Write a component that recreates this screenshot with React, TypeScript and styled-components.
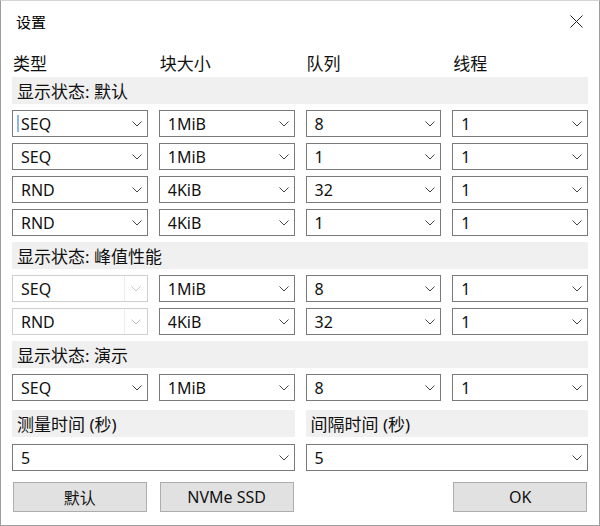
import React from "react";
import styled, { createGlobalStyle } from "styled-components";

const GlobalStyle = createGlobalStyle`
  html, body {
    margin: 0;
    padding: 0;
    background: #ffffff;
  }
  body {
    font-family: "Noto Sans", "Noto Sans CJK SC", sans-serif;
    color: #111;
  }
`;

// window frame
const Window = styled.div`
  width: 600px;
  height: 526px;
  box-sizing: border-box;
  border: 1px solid #9c9c9c;
  border-top-color: #d4d4d4;
  background: #fff;
  display: flex;
  flex-direction: column;
`;

const TitleBar = styled.div`
  height: 41px;
  display: flex;
  align-items: center;
  justify-content: space-between;
  padding: 0 16px 0 15px;
  font-family: "Noto Sans CJK SC", sans-serif;
  font-size: 15px;
  color: #000;
`;

const CloseButton = styled.div`
  width: 14px;
  height: 14px;
  display: flex;
  align-items: center;
  justify-content: center;
`;

const Body = styled.div`
  flex: 1;
  display: flex;
  flex-direction: column;
  padding: 0 11px 13px 11px;
`;

const Grid = styled.div<{ $cols: number }>`
  display: grid;
  grid-template-columns: repeat(${(p) => p.$cols}, 1fr);
  column-gap: 11px;
`;

const HeaderRow = styled(Grid)`
  height: 36px;
  padding-top: 9px;
  box-sizing: border-box;
  align-items: start;
`;

const HeaderCell = styled.div`
  font-family: "Noto Sans CJK SC", sans-serif;
  font-size: 17px;
  line-height: 26px;
  padding-left: 1px;
  color: #111;
`;

const List = styled.div`
  display: flex;
  flex-direction: column;
  gap: 6px;
`;

const Band = styled.div`
  height: 27px;
  background: #f0f0f0;
  display: flex;
  align-items: center;
  padding-left: 5px;
  font-family: "Noto Sans", "Noto Sans CJK SC", sans-serif;
  font-size: 17px;
  color: #111;
`;

const Select = styled.div<{ $disabled?: boolean; $focused?: boolean }>`
  position: relative;
  height: 27px;
  box-sizing: border-box;
  border: 1px solid ${(p) => (p.$disabled ? "#cfcfcf" : "#7a7a7a")};
  background: #fff;
  display: flex;
  align-items: center;
  font-size: 16px;
  color: #111;

  &::before {
    content: "";
    display: ${(p) => (p.$focused ? "block" : "none")};
    position: absolute;
    left: 4px;
    top: 4px;
    bottom: 4px;
    width: 2px;
    background: #8cb8e6;
  }
`;

const SelectText = styled.span`
  flex: 1;
  padding-left: 8px;
  font-family: "Noto Sans", "Noto Sans CJK SC", sans-serif;
`;

const Chevron = styled.span<{ $disabled?: boolean }>`
  align-self: stretch;
  width: ${(p) => (p.$disabled ? "22px" : "20px")};
  display: flex;
  align-items: center;
  justify-content: center;
  border-left: 1px solid ${(p) => (p.$disabled ? "#ececec" : "transparent")};
`;

const Footer = styled.div`
  margin-top: 9px;
  display: flex;
  flex-direction: column;
  gap: 7px;
`;

const ButtonRow = styled(Grid)`
  margin-top: 11px;
`;

const Button = styled.div<{ $col: number }>`
  grid-column: ${(p) => p.$col};
  margin: 0 1px;
  height: 30px;
  box-sizing: border-box;
  background: #e1e1e1;
  border: 1px solid #adadad;
  display: flex;
  align-items: center;
  justify-content: center;
  font-family: "Noto Sans", "Noto Sans CJK SC", sans-serif;
  font-size: 16px;
  color: #111;
`;

const ChevronIcon = ({ disabled }: { disabled?: boolean }) => (
  <svg width="10" height="6" viewBox="0 0 10 6">
    <polyline
      points="0.5,0.5 5,5 9.5,0.5"
      fill="none"
      stroke={disabled ? "#c2c2c2" : "#444"}
      strokeWidth="1"
    />
  </svg>
);

interface DropProps {
  value: string;
  disabled?: boolean;
  focused?: boolean;
}

const Drop = ({ value, disabled, focused }: DropProps) => (
  <Select $disabled={disabled} $focused={focused}>
    <SelectText>{value}</SelectText>
    <Chevron $disabled={disabled}>
      <ChevronIcon disabled={disabled} />
    </Chevron>
  </Select>
);

type Row = [string, string, string, string];

const sections: { title: string; rows: Row[]; locked?: boolean }[] = [
  {
    title: "显示状态: 默认",
    rows: [
      ["SEQ", "1MiB", "8", "1"],
      ["SEQ", "1MiB", "1", "1"],
      ["RND", "4KiB", "32", "1"],
      ["RND", "4KiB", "1", "1"],
    ],
  },
  {
    title: "显示状态: 峰值性能",
    locked: true,
    rows: [
      ["SEQ", "1MiB", "8", "1"],
      ["RND", "4KiB", "32", "1"],
    ],
  },
  {
    title: "显示状态: 演示",
    rows: [["SEQ", "1MiB", "8", "1"]],
  },
];

export default function App() {
  return (
    <>
      <GlobalStyle />
      <Window>
        <TitleBar>
          <span>设置</span>
          <CloseButton>
            <svg width="13" height="13" viewBox="0 0 13 13">
              <path d="M0.5 0.5 L12.5 12.5 M12.5 0.5 L0.5 12.5" stroke="#222" strokeWidth="1" />
            </svg>
          </CloseButton>
        </TitleBar>
        <Body>
          <HeaderRow $cols={4}>
            <HeaderCell>类型</HeaderCell>
            <HeaderCell>块大小</HeaderCell>
            <HeaderCell>队列</HeaderCell>
            <HeaderCell>线程</HeaderCell>
          </HeaderRow>
          <List>
            {sections.map((s, si) => (
              <React.Fragment key={s.title}>
                <Band>{s.title}</Band>
                {s.rows.map((r, ri) => (
                  <Grid $cols={4} key={ri}>
                    {r.map((v, ci) => (
                      <Drop
                        key={ci}
                        value={v}
                        disabled={s.locked && ci === 0}
                        focused={si === 0 && ri === 0 && ci === 0}
                      />
                    ))}
                  </Grid>
                ))}
              </React.Fragment>
            ))}
          </List>
          <Footer>
            <Grid $cols={2}>
              <Band>测量时间 (秒)</Band>
              <Band>间隔时间 (秒)</Band>
            </Grid>
            <Grid $cols={2}>
              <Drop value="5" />
              <Drop value="5" />
            </Grid>
          </Footer>
          <ButtonRow $cols={4}>
            <Button $col={1}>默认</Button>
            <Button $col={2}>NVMe SSD</Button>
            <Button $col={4}>OK</Button>
          </ButtonRow>
        </Body>
      </Window>
    </>
  );
}
